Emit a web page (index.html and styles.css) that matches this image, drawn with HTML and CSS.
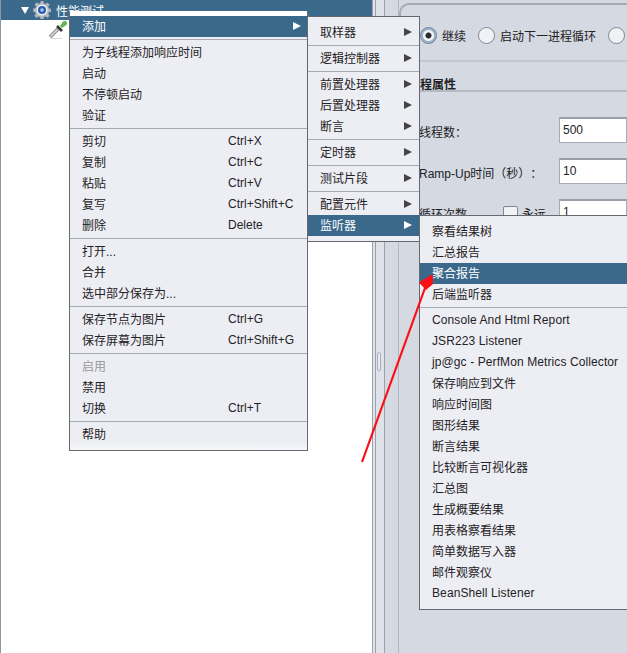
FILE: index.html
```html
<!DOCTYPE html>
<html lang="zh">
<head>
<meta charset="utf-8">
<title>JMeter 菜单</title>
<link rel="stylesheet" href="styles.css">
</head>
<body>
<div class="app">
  <section class="tree">
    <div class="tree-root">
      <span class="twist"></span>
      <svg class="gear" viewBox="0 0 18 18" width="18" height="18"><path d="M7.500 0h3l.4 2.400 1.600.7 2-1.400 2.100 2.100-1.400 2 .7 1.600 2.400.4v3l-2.400.4-.7 1.600 1.400 2-2.100 2.100-2-1.400-1.600.7-.4 2.400h-3l-.4-2.400-1.600-.7-2 1.400-2.100-2.100 1.400-2-.7-1.600L0 10.500v-3l2.400-.4.7-1.600-1.400-2 2.100-2.100 2 1.400 1.600-.7z" fill="#b4bbc4" stroke="#7d8690" stroke-width=".5"/><circle cx="9" cy="9" r="4.800" fill="#2a5fb0" stroke="#eef1f5" stroke-width="1.500"/><circle cx="9" cy="9" r="1.800" fill="#a9c8ee"/></svg>
      <span class="root-label">性能测试</span>
    </div>
    <div class="tree-child">
      <svg class="dropper" viewBox="0 0 20 20" width="20" height="20"><path d="M3 18.500h11" stroke="#d8d8d8" stroke-width="1"/><path d="M2 17 L10 9" stroke="#8a8a8a" stroke-width="3.500"/><path d="M2.500 16.500 L9.500 9.500" stroke="#e6e6e6" stroke-width="1.200"/><path d="M9 6 L14 11" stroke="#333" stroke-width="2.500"/><path d="M12 6 L15 1.500 Q17 0 18.500 1.500 Q20 3 18.500 5 L14 8z" fill="#66b45a"/></svg>
    </div>
  </section>
  <div class="splitter">
    <div class="split-a"></div>
    <div class="split-b"><span class="grip"></span></div>
    <div class="split-c"></div>
  </div>
  <section class="panel">
    <div class="action-box">
      <label class="radio on">继续</label>
      <label class="radio">启动下一进程循环</label>
      <label class="radio"></label>
    </div>
    <h3 class="props-title">线程属性</h3>
    <div class="fields">
      <div class="field-row"><span class="field-label">线程数：</span><span class="field-input">500</span></div>
      <div class="field-row"><span class="field-label">Ramp-Up时间（秒）：</span><span class="field-input">10</span></div>
      <div class="field-row"><span class="field-label">循环次数 <span class="check"></span> 永远</span><span class="field-input">1</span></div>
    </div>
  </section>
</div>

<div class="menu menu-main">
  <div class="item active">添加<span class="arrow"></span></div>
  <hr>
  <div class="item">为子线程添加响应时间</div>
  <div class="item">启动</div>
  <div class="item">不停顿启动</div>
  <div class="item">验证</div>
  <hr>
  <div class="item">剪切<span class="key">Ctrl+X</span></div>
  <div class="item">复制<span class="key">Ctrl+C</span></div>
  <div class="item">粘贴<span class="key">Ctrl+V</span></div>
  <div class="item">复写<span class="key">Ctrl+Shift+C</span></div>
  <div class="item">删除<span class="key">Delete</span></div>
  <hr>
  <div class="item">打开...</div>
  <div class="item">合并</div>
  <div class="item">选中部分保存为...</div>
  <hr>
  <div class="item">保存节点为图片<span class="key">Ctrl+G</span></div>
  <div class="item">保存屏幕为图片<span class="key">Ctrl+Shift+G</span></div>
  <hr>
  <div class="item off">启用</div>
  <div class="item">禁用</div>
  <div class="item">切换<span class="key">Ctrl+T</span></div>
  <hr>
  <div class="item">帮助</div>
</div>

<div class="menu menu-sub">
  <div class="item">取样器<span class="arrow"></span></div>
  <hr>
  <div class="item">逻辑控制器<span class="arrow"></span></div>
  <hr>
  <div class="item">前置处理器<span class="arrow"></span></div>
  <div class="item">后置处理器<span class="arrow"></span></div>
  <div class="item">断言<span class="arrow"></span></div>
  <hr>
  <div class="item">定时器<span class="arrow"></span></div>
  <hr>
  <div class="item">测试片段<span class="arrow"></span></div>
  <hr>
  <div class="item">配置元件<span class="arrow"></span></div>
  <div class="item active">监听器<span class="arrow"></span></div>
</div>

<div class="menu menu-listeners">
  <div class="item">察看结果树</div>
  <div class="item">汇总报告</div>
  <div class="item active">聚合报告</div>
  <div class="item">后端监听器</div>
  <hr>
  <div class="item latin">Console And Html Report</div>
  <div class="item latin">JSR223 Listener</div>
  <div class="item latin">jp@gc - PerfMon Metrics Collector</div>
  <div class="item">保存响应到文件</div>
  <div class="item">响应时间图</div>
  <div class="item">图形结果</div>
  <div class="item">断言结果</div>
  <div class="item">比较断言可视化器</div>
  <div class="item">汇总图</div>
  <div class="item">生成概要结果</div>
  <div class="item">用表格察看结果</div>
  <div class="item">简单数据写入器</div>
  <div class="item">邮件观察仪</div>
  <div class="item latin">BeanShell Listener</div>
</div>

<svg class="annotation" width="627" height="653" viewBox="0 0 627 653">
  <path d="M362 462 L425 288" stroke="#fb0f14" stroke-width="2.200" fill="none"/>
  <path d="M432.500 274 L419 282.500 L426 290 L433 284 Z" fill="#fb0f14"/>
</svg>
</body>
</html>
```
FILE: styles.css
```css
* { box-sizing: border-box; }
html, body { margin: 0; padding: 0; }
body {
  width: 627px;
  height: 653px;
  overflow: hidden;
  background: #d5d9e2;
  font: 12px "Liberation Sans", "Noto Sans CJK SC", sans-serif;
  color: #222;
  position: relative;
  text-spacing-trim: space-all;
}
.app { display: flex; height: 653px; }

/* tree */
.tree {
  width: 372px;
  flex: none;
  background: #fff;
  border-left: 1px solid #8e96a3;
}
.tree-root {
  height: 20px;
  background: #3a698c;
  color: #fff;
  display: flex;
  align-items: center;
  padding-left: 20px;
}
.twist {
  width: 0;
  height: 0;
  border-left: 4px solid transparent;
  border-right: 4px solid transparent;
  border-top: 7px solid #fff;
  margin-right: 4px;
}
.gear { margin-right: 5px; }
.tree-child { padding-left: 47px; height: 20px; }

/* splitter */
.splitter { width: 27px; flex: none; display: flex; }
.split-a { width: 4px; background: #e2e4ea; border-left: 1px solid #9aa0ac; border-right: 1px solid #9aa0ac; }
.split-b {
  width: 9px;
  background: #dfe2e8;
  border-right: 1px solid #9aa0ac;
  padding: 352px 0 0 1px;
}
.split-c { flex: 1; background: #d5d9e2; border-right: 1px solid #b3b7bf; }
.grip {
  display: block;
  width: 4px;
  height: 19px;
  border: 1px solid #aab0ba;
  border-radius: 2px;
  background: #e8eaef;
}

/* panel */
.panel { flex: 1; min-width: 0; padding-top: 3px; }
.action-box {
  height: 59px;
  border: 1px solid #a5aab4;
  border-top-width: 2px;
  border-left-width: 2px;
  border-right: 0;
  border-top-left-radius: 10px;
  border-bottom: 2px solid #c2c6cf;
  display: flex;
  align-items: center;
  padding: 6px 0 0 19px;
  gap: 12px;
  white-space: nowrap;
}
.radio { display: flex; flex: none; align-items: center; gap: 5px; font-size: 12px; }
.radio::before {
  content: "";
  width: 15px;
  height: 15px;
  border-radius: 50%;
  border: 1px solid #80868f;
  background: #f1f2f5;
  flex: none;
}
.radio.on::before {
  border-color: #6f8296;
  background: radial-gradient(circle, #2b2b2b 0 2.500px, #f1f2f5 3.500px 5px, #9fb3c8 6px);
}
.props-title {
  margin: 0;
  height: 30px;
  padding: 16px 0 0 9px;
  font-size: 12px;
  font-weight: 700;
  line-height: 14px;
  border-bottom: 2px solid #b5b9c2;
}
.fields { display: flex; flex-direction: column; gap: 15px; padding-top: 25px; }
.field-row {
  display: flex;
  justify-content: space-between;
  align-items: center;
  height: 26px;
  font-size: 12px;
}
.field-label { padding: 2px 0 0 20px; display: flex; gap: 4px; align-items: center; }
.check {
  width: 15px;
  height: 15px;
  border: 1px solid #80868f;
  border-radius: 2px;
  background: #f1f2f5;
  margin-left: 32px;
}
.field-input {
  width: 68px;
  height: 26px;
  background: #fff;
  border: 1px solid #a5aab4;
  border-top: 2px solid #9a9ea8;
  display: flex;
  align-items: center;
  padding: 0 0 2px 3px;
  font-size: 12px;
}

/* menus */
.menu {
  position: absolute;
  background: #edeef3;
  border: 1px solid #666a70;
  padding-top: 5px;
}
.menu hr {
  border: 0;
  height: 1px;
  margin: 2px 0;
  background: #a6a9b1;
}
.menu-main {
  left: 69px;
  top: 11px;
  width: 239px;
  height: 440px;
  border-top: 0;
  background: linear-gradient(#edeef3 0 431px, #f6f7f9);
}
.menu-main::before { content: ""; display: block; height: 5px; margin-top: -5px; background: #fff; }
.menu-sub { left: 307px; top: 16px; width: 113px; height: 226px; }
.menu-listeners { left: 419px; top: 215px; width: 220px; height: 395px; }
.item {
  height: 21px;
  line-height: 23px;
  padding-left: 12px;
  position: relative;
  white-space: nowrap;
  color: #1f2226;
}
.item.active { background: #3a698c; color: #fff; }
.item.off { color: #9a9a9a; }
.item.latin { letter-spacing: .1px; line-height: 21px; }
.key { position: absolute; left: 158px; top: 0; line-height: 21px; }
.arrow {
  position: absolute;
  right: 6px;
  top: 6px;
  width: 0;
  height: 0;
  border-top: 4.500px solid transparent;
  border-bottom: 4.500px solid transparent;
  border-left: 8px solid #444;
}
.menu-sub .arrow { right: 7px; }
.active .arrow { border-left-color: #fff; }
.annotation { position: absolute; left: 0; top: 0; pointer-events: none; }
```
